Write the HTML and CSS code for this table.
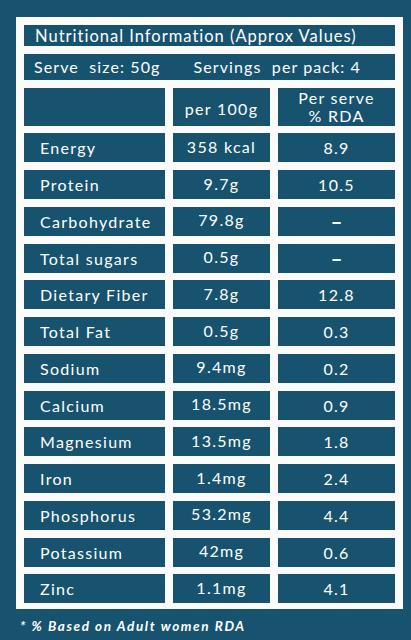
FILE: index.html
```html
<!DOCTYPE html>
<html lang="en">
<head>
  <meta charset="UTF-8" />
  <title>Nutritional Information</title>
  <link rel="stylesheet" href="styles.css">
</head>
<body>
  <div class="panel">
    <div class="table">
      <!-- 見出し -->
      <div class="cell wide title">Nutritional Information (Approx Values)</div>
      <div class="cell wide serve">
        <span>Serve&nbsp; size: 50g</span>
        <span>Servings&nbsp; per pack: 4</span>
      </div>
      <div class="cell"></div>
      <div class="cell center head">per 100g</div>
      <div class="cell center head rda">Per serve<br>% RDA</div>

      <!-- 栄養素 -->
      <div class="cell name">Energy</div><div class="cell center val">358 kcal</div><div class="cell center">8.9</div>
      <div class="cell name">Protein</div><div class="cell center val">9.7g</div><div class="cell center">10.5</div>
      <div class="cell name">Carbohydrate</div><div class="cell center val">79.8g</div><div class="cell center dash">–</div>
      <div class="cell name">Total sugars</div><div class="cell center val">0.5g</div><div class="cell center dash">–</div>
      <div class="cell name">Dietary Fiber</div><div class="cell center val">7.8g</div><div class="cell center">12.8</div>
      <div class="cell name">Total Fat</div><div class="cell center val">0.5g</div><div class="cell center">0.3</div>
      <div class="cell name">Sodium</div><div class="cell center val">9.4mg</div><div class="cell center">0.2</div>
      <div class="cell name">Calcium</div><div class="cell center val">18.5mg</div><div class="cell center">0.9</div>
      <div class="cell name">Magnesium</div><div class="cell center val">13.5mg</div><div class="cell center">1.8</div>
      <div class="cell name">Iron</div><div class="cell center val">1.4mg</div><div class="cell center">2.4</div>
      <div class="cell name">Phosphorus</div><div class="cell center val">53.2mg</div><div class="cell center">4.4</div>
      <div class="cell name">Potassium</div><div class="cell center val">42mg</div><div class="cell center">0.6</div>
      <div class="cell name">Zinc</div><div class="cell center val">1.1mg</div><div class="cell center">4.1</div>
    </div>
  </div>
  <p class="note">* % Based on Adult women RDA</p>
</body>
</html>
```

FILE: styles.css
```css
/* 全体 */
html, body {
  margin: 0;
  padding: 0;
  background: #17536e;
  font-family: "Lato", "DejaVu Sans", sans-serif;
  color: #fff;
  height: 100vh;
  overflow: hidden;
}

/* 白い枠 */
.panel {
  background: #fbfbfb;
  margin: 17px 8px 0 16px;
  padding: 8px 8px 6px;
}

.table {
  display: grid;
  grid-template-columns: 141px 97px 117px;
  grid-template-rows: 21px 26px 38px repeat(13, 29px);
  column-gap: 8px;
  row-gap: 7.75px;
}

.cell {
  background: #17536e;
  display: flex;
  align-items: center;
  font-size: 16px;
  letter-spacing: 1.3px;
  white-space: nowrap;
}
.wide {
  grid-column: 1 / -1;
}
.title {
  padding-left: 11px;
  font-size: 16.5px;
  letter-spacing: 1px;
}
.serve {
  padding-left: 10px;
  gap: 33px;
  letter-spacing: 1.1px;
}
.name {
  padding-left: 16px;
}
.center {
  justify-content: center;
  text-align: center;
}
.val {
  padding-bottom: 3px;
}
.head {
  padding-top: 4px;
}
.rda {
  line-height: 18px;
  padding-top: 0;
}
.dash {
  font-size: 20px;
  font-weight: 900;
  letter-spacing: 0;
}

/* 注記 */
.note {
  margin: 9px 0 0 20px;
  font-size: 13.5px;
  font-style: italic;
  font-weight: bold;
  letter-spacing: 1.6px;
}
```
